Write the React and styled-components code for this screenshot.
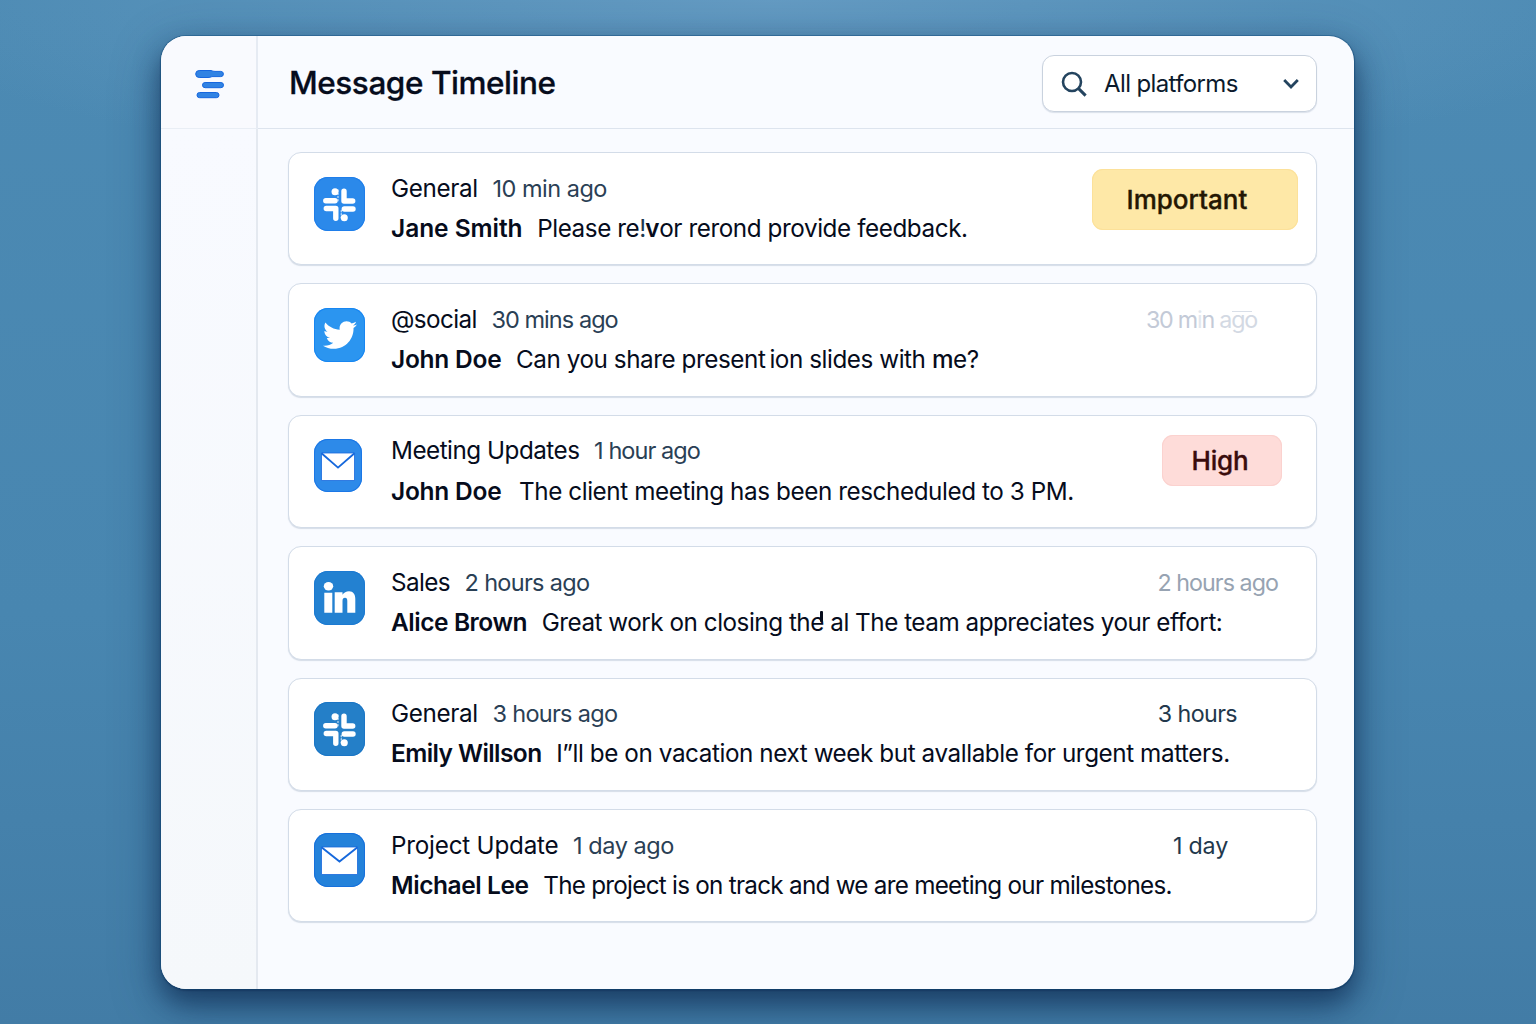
import React from 'react';
import styled, { createGlobalStyle } from 'styled-components';
import { FaTwitter } from 'react-icons/fa';

const GlobalStyle = createGlobalStyle`
  * { box-sizing: border-box; }
  body {
    margin: 0;
    font-family: Inter, Roboto, "Liberation Sans", sans-serif;
    color: #060c1c;
  }
`;

const Page = styled.div`
  height: 1024px;
  padding: 36px 182px 35px 161px;
  overflow: hidden;
  background:
    radial-gradient(ellipse 900px 180px at 50% 0, rgba(110, 162, 201, 0.7), rgba(110, 162, 201, 0)),
    linear-gradient(180deg, #4c8ab3 0%, #4886b0 60%, #427ca6 100%);
`;

const Panel = styled.div`
  display: grid;
  grid-template-columns: 97px minmax(0, 1fr);
  grid-template-rows: 93px 1fr;
  height: 953px;
  border-radius: 25px;
  overflow: hidden;
  background: #f9fbff;
  box-shadow:
    0 0 0 1px rgba(22, 84, 134, 0.45),
    0 1px 2px rgba(3, 24, 62, 0.75),
    0 14px 26px rgba(12, 38, 76, 0.6),
    0 14px 50px rgba(16, 50, 90, 0.4);
`;

const Brand = styled.div`
  display: flex;
  align-items: center;
  justify-content: center;
  padding: 3px 0 0 2px;
  background: #f9fafe;
  border-right: 2px solid #e6ebf3;
  border-bottom: 1px solid #e9eef5;
`;

const Header = styled.header`
  display: flex;
  align-items: center;
  justify-content: space-between;
  padding: 0 37px 0 31px;
  border-bottom: 1px solid #dde4ee;
`;

const Sidebar = styled.aside`
  background: linear-gradient(180deg, #f8faff, #f5f8fb);
  border-right: 2px solid #e4e9f0;
`;

const Title = styled.h1`
  margin: 1px 0 0;
  font-size: 31.5px;
  font-weight: 500;
  line-height: 40px;
  letter-spacing: -0.45px;
  -webkit-text-stroke: 0.3px #060c1c;
  white-space: nowrap;
`;

const Select = styled.button`
  display: flex;
  align-items: center;
  width: 275px;
  height: 57px;
  margin: 2px 0 0;
  padding: 2px 16px 0 18px;
  border: 1.5px solid #c9d2de;
  border-radius: 12px;
  background: #fff;
  box-shadow: 0 1px 1px rgba(160, 176, 196, 0.35);
  color: #0b1a2c;
  font: 400 24px/40px Inter, Roboto, sans-serif;
  letter-spacing: -0.62px;
`;

const SelectLabel = styled.span`
  flex: 1;
  margin: -1px 0 0 17px;
  text-align: left;
  white-space: nowrap;
`;

const List = styled.main`
  display: flex;
  flex-direction: column;
  gap: 18px;
  padding: 23px 37px 0 30px;
`;

const Card = styled.article`
  display: flex;
  align-items: flex-start;
  height: 113.4px;
  padding-left: 24px;
  border: 1px solid #d3dce8;
  border-radius: 13px;
  background: #fff;
  box-shadow: 0 1px 1px rgba(170, 184, 202, 0.45);
`;

const Tile = styled.div`
  flex: none;
  width: ${(p) => p.$w}px;
  height: ${(p) => (p.$w < 50 ? 53 : 54)}px;
  margin: 23.5px ${(p) => 77 - p.$w}px 0 1px;
  display: flex;
  align-items: center;
  justify-content: center;
  border-radius: 14px;
  background: ${(p) => p.$color};
  box-shadow: inset 0 0 0 1px ${(p) => p.$edge};
  color: #fff;
`;

const Body = styled.div`
  flex: 1;
  min-width: 0;
  padding-top: 15.6px;
`;

const Line = styled.div`
  display: flex;
  align-items: baseline;
  height: 39.3px;
  line-height: 40px;
  gap: ${(p) => p.$gap || 14.6}px;
  white-space: nowrap;
`;

const Channel = styled.span`
  font-size: 24.25px;
  letter-spacing: ${(p) => p.$track}px;
`;

const Ago = styled.span`
  font-size: 23.5px;
  color: #2a4055;
  letter-spacing: ${(p) => p.$track}px;
`;

const Sender = styled.strong`
  font-size: 24.5px;
  font-weight: 600;
  letter-spacing: ${(p) => p.$track}px;
`;

const Message = styled.span`
  font-size: 24.25px;
  letter-spacing: ${(p) => p.$track}px;
`;

const Tag = styled.div`
  flex: none;
  width: ${(p) => p.$w}px;
  height: ${(p) => p.$h}px;
  margin: ${(p) => p.$top}px ${(p) => p.$right}px 0 0;
  padding-left: ${(p) => p.$pad}px;
  border-radius: 11px;
  background: ${(p) => p.$bg};
  box-shadow: inset 0 0 0 1px ${(p) => p.$edge};
  color: ${(p) => p.$fg};
  font-size: 26px;
  font-weight: 500;
  -webkit-text-stroke: 0.35px ${(p) => p.$fg};
  letter-spacing: ${(p) => p.$track}px;
  line-height: ${(p) => p.$h + 1}px;
`;

const Stamp = styled.div`
  flex: none;
  position: relative;
  margin: 15.6px ${(p) => p.$right}px 0 0;
  color: ${(p) => p.$color};
  font-size: 23.25px;
  letter-spacing: ${(p) => p.$track}px;
  line-height: 40px;
  white-space: nowrap;
`;

const Pale = styled.span`
  color: ${(p) => p.$color};
`;

const Overbar = styled.span`
  position: absolute;
  top: 11px;
  right: 5px;
  width: 20px;
  height: 1.5px;
  background: #d9dfe8;
`;

const Heavy = styled.span`
  font-weight: ${(p) => p.$weight || 600};
`;

const Thin = styled.span`
  display: inline-block;
  width: 4px;
  margin-right: 2px;
  color: #1d3850;
`;

const Tick = styled.span`
  position: absolute;
  right: 1px;
  top: 3px;
  width: 3px;
  height: 11px;
  border-radius: 1px;
  background: #060c1c;
`;

const Marked = styled.span`
  position: relative;
`;

const Logo = () => (
  <svg width="30" height="30" viewBox="0 0 30 30" fill="#3183e3" stroke="#1767de" strokeWidth="1">
    <path d="M4.2 1.5H16q2 .9 4 .9h5.8a2.6 2.6 0 0 1 0 5.2H17q-2 .9-4 .9H4.2a3.4 3.4 0 0 1 0-7z" />
    <rect x="7.5" y="13.5" width="21" height="5.2" rx="2.6" />
    <rect x="2" y="23.5" width="22" height="5.2" rx="2.6" />
  </svg>
);

const SearchIcon = () => (
  <svg width="26" height="26" viewBox="0 0 26 26" fill="none" stroke="#24445f" strokeWidth="2.6">
    <circle cx="11" cy="11" r="9" />
    <path d="M17.6 17.6 24.6 24.6" strokeWidth="3" />
  </svg>
);

const ChevronIcon = () => (
  <svg width="18" height="12" viewBox="0 0 18 12" fill="none" stroke="#24445f" strokeWidth="2.8">
    <path d="M2.2 2 9 8.9 15.8 2" />
  </svg>
);

const SlackIcon = () => (
  <svg width="51" height="54" viewBox="0 0 51 54" fill="none" stroke="#fff" strokeWidth="5.4" strokeLinecap="round" strokeLinejoin="round">
    <path d="M11.8 23.7H21M30 14.3V24h8.7M12.3 31.5h9.5v9.8M30.3 32H39" />
    <circle cx="21" cy="14.7" r="3.5" fill="#fff" stroke="none" />
    <circle cx="30.3" cy="40.7" r="3.5" fill="#fff" stroke="none" />
    <path d="M24 13v11M27.3 33.5V42" strokeWidth="1.4" strokeDasharray="1.2 2" opacity=".65" />
  </svg>
);

const LinkedInIcon = () => (
  <svg width="51" height="54" viewBox="0 0 51 54" fill="#fff">
    <ellipse cx="14.5" cy="15.2" rx="4.7" ry="4.2" />
    <path d="M10.3 21.7h8v20h-8zM20.7 21.2h7.8v2.6c1.5-2.3 3.7-3.5 6.5-3.5 4.3 0 6.3 3.1 6.3 7.7v13.7h-8V30c0-2.2-.7-3.2-2.3-3.2s-2.5 1.2-2.5 3.2v11.7h-7.8z" />
  </svg>
);

const MailIcon = ({ w }) => (
  <svg width={w} height="54" viewBox={`0 0 ${w} 54`} fill="none">
    <path d={`M7.5 14H${w - 7.5}V41.5H7.5z`} fill="#fff" stroke="#1668dc" strokeWidth=".8" />
    <path d={`M7.5 14.3 ${w / 2} 28.6 ${w - 7.5} 14.3`} stroke="#1668dc" strokeWidth="1.9" />
  </svg>
);

const rows = [
  {
    tile: { $w: 51, $color: '#2b89ea', $edge: '#1f7eea' },
    icon: <SlackIcon />,
    channel: ['General', -0.35], ago: ['10 min ago', -0.5],
    sender: ['Jane Smith', -0.05],
    message: [<>Please re<Thin>!</Thin><Heavy>v</Heavy>or rerond provide feedback.</>, -0.42],
    side: (
      <Tag $w={206} $h={60.5} $top={16} $right={18} $pad={34.6} $bg="#fee8a7" $edge="#fce19a" $fg="#241703" $track={0}>Important</Tag>
    ),
  },
  {
    tile: { $w: 51, $color: '#2b95f0', $edge: '#1786f2' },
    icon: <FaTwitter size={34} />,
    channel: ['@social', -0.6], ago: ['30 mins ago', -0.95],
    sender: ['John Doe', -0.25],
    message: [<>Can you share present&thinsp;ion slides with <Heavy $weight={500}>m</Heavy>e?</>, -0.44],
    side: (
      <Stamp $right={59} $color="#c3cad7" $track={-1.2}>
        30 m<Pale $color="#e2e7ee">i</Pale>n <Pale $color="#d3d9e3">ago</Pale><Overbar />
      </Stamp>
    ),
  },
  {
    tile: { $w: 48, $color: '#2d8ae9', $edge: '#1b77e6' },
    icon: <MailIcon w={48} />,
    channel: ['Meeting Updates', -0.5], ago: ['1 hour ago', -0.95],
    sender: ['John Doe', -0.25], gap: 17.6,
    message: ['The client meeting has been rescheduled to 3 PM.', -0.42],
    side: (
      <Tag $w={120} $h={51} $top={19} $right={34} $pad={29.6} $bg="#fedcd9" $edge="#fbd2cf" $fg="#3a0c0c" $track={-0.2}>High</Tag>
    ),
  },
  {
    tile: { $w: 51, $color: '#2381d1', $edge: '#1c7ad2' },
    icon: <LinkedInIcon />,
    channel: ['Sales', -0.6], ago: ['2 hours ago', -0.7],
    sender: ['Alice Brown', -0.45],
    message: [<>Great work on closing th<Marked>e<Tick /></Marked> al The team appreciates your effort:</>, -0.48],
    side: <Stamp $right={38} $color="#97a3b2" $track={-0.95}>2 hours ago</Stamp>,
  },
  {
    tile: { $w: 51, $color: '#247fc8', $edge: '#1b76c6' },
    icon: <SlackIcon />,
    channel: ['General', -0.35], ago: ['3 hours ago', -0.7],
    sender: ['Emily Willson', -0.58],
    message: ['I”ll be on vacation next week but avallable for urgent matters.', -0.42],
    side: <Stamp $right={79} $color="#22384c" $track={-0.6}>3 hours</Stamp>,
  },
  {
    tile: { $w: 51, $color: '#2482da', $edge: '#1670dc' },
    icon: <MailIcon w={51} />,
    channel: ['Project Update', -0.22], ago: ['1 day ago', -0.45],
    sender: ['Michael Lee', -0.42],
    message: ['The project is on track and we are meeting our milestones.', -0.74],
    side: <Stamp $right={88} $color="#22384c" $track={-0.2}>1 day</Stamp>,
  },
];

export default function App() {
  return (
    <Page>
      <GlobalStyle />
      <Panel>
        <Brand><Logo /></Brand>
        <Header>
          <Title>Message Timeline</Title>
          <Select>
            <SearchIcon />
            <SelectLabel>All platforms</SelectLabel>
            <ChevronIcon />
          </Select>
        </Header>
        <Sidebar />
        <List>
          {rows.map((r, i) => (
            <Card key={i}>
              <Tile {...r.tile}>{r.icon}</Tile>
              <Body>
                <Line>
                  <Channel $track={r.channel[1]}>{r.channel[0]}</Channel>
                  <Ago $track={r.ago[1]}>{r.ago[0]}</Ago>
                </Line>
                <Line $gap={r.gap}>
                  <Sender $track={r.sender[1]}>{r.sender[0]}</Sender>
                  <Message $track={r.message[1]}>{r.message[0]}</Message>
                </Line>
              </Body>
              {r.side}
            </Card>
          ))}
        </List>
      </Panel>
    </Page>
  );
}
